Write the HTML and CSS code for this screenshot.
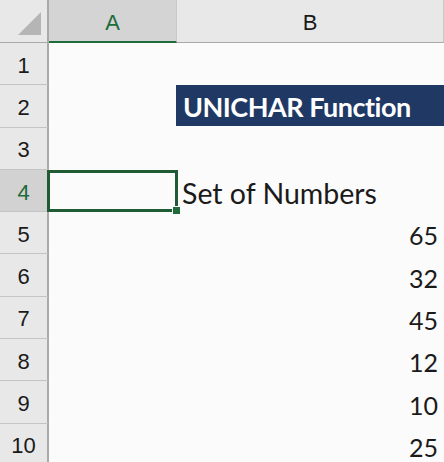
FILE: index.html
```html
<!DOCTYPE html>
<html>
<head>
<meta charset="utf-8">
<link rel="stylesheet" href="styles.css">
</head>
<body>
<div class="sheet">
  <div class="corner"><span class="tri"></span></div>
  <div class="colhead sel">A</div>
  <div class="colhead">B</div>

  <div class="rowhead">1</div><div class="cell"></div><div class="cell"></div>
  <div class="rowhead">2</div><div class="cell"></div><div class="cell"><div class="title">UNICHAR Function</div></div>
  <div class="rowhead">3</div><div class="cell"></div><div class="cell"></div>
  <div class="rowhead sel">4</div><div class="cell active"><span class="handle"></span></div><div class="cell text">Set of Numbers</div>
  <div class="rowhead">5</div><div class="cell"></div><div class="cell num">65</div>
  <div class="rowhead">6</div><div class="cell"></div><div class="cell num">32</div>
  <div class="rowhead">7</div><div class="cell"></div><div class="cell num">45</div>
  <div class="rowhead">8</div><div class="cell"></div><div class="cell num">12</div>
  <div class="rowhead">9</div><div class="cell"></div><div class="cell num">10</div>
  <div class="rowhead">10</div><div class="cell"></div><div class="cell num">25</div>
</div>
</body>
</html>
```
FILE: styles.css
```css
html, body {
  margin: 0;
  padding: 0;
  background: #fbfbfb;
  overflow: hidden;
}
.sheet {
  display: grid;
  grid-template-columns: 49px 128px 267px;
  grid-template-rows: 43px repeat(10, 42.3px);
  font-family: "Lato", "Open Sans", sans-serif;
  color: #1a1a1a;
}
.corner {
  background: #e8e8e8;
  border-right: 2px solid #a9a9a9;
  border-bottom: 1px solid #a9a9a9;
  position: relative;
}
.tri {
  position: absolute;
  right: 6px;
  bottom: 7px;
  width: 0;
  height: 0;
  border-left: 23px solid transparent;
  border-bottom: 23px solid #b5b5b5;
}
.colhead {
  background: #e8e8e8;
  border-bottom: 1px solid #a9a9a9;
  border-right: 1px solid #c8c8c8;
  display: flex;
  align-items: center;
  justify-content: center;
  font-family: "Liberation Sans", sans-serif;
  font-size: 22px;
  padding-top: 4px;
  box-sizing: border-box;
}
.colhead.sel {
  background: #d4d4d4;
  color: #1e6b3c;
  border-bottom: 2px solid #1f6b3a;
}
.rowhead {
  background: #e8e8e8;
  border-right: 2px solid #a9a9a9;
  border-bottom: 1px solid #c4c4c4;
  display: flex;
  align-items: center;
  justify-content: center;
  font-family: "Liberation Sans", sans-serif;
  font-size: 22px;
  padding-top: 4px;
  box-sizing: border-box;
}
.rowhead.sel {
  background: #d2d2d2;
  color: #1e6b3c;
}
.cell {
  position: relative;
  box-sizing: border-box;
  font-size: 25px;
}
.title {
  position: absolute;
  left: -1px;
  top: 0;
  right: 0;
  height: 41px;
  background: #1f3864;
  color: #ffffff;
  font-weight: bold;
  font-size: 27px;
  letter-spacing: -0.5px;
  display: flex;
  align-items: center;
  padding-left: 7px;
  padding-top: 2px;
  box-sizing: border-box;
}
.active {
  border: 3px solid #1f5c34;
  margin-left: -2px;
  margin-right: -1px;
}
.handle {
  position: absolute;
  right: -6px;
  bottom: -6px;
  width: 7px;
  height: 7px;
  background: #1f6b3a;
  border: 1px solid #fbfbfb;
}
.text {
  display: flex;
  align-items: center;
  padding-left: 5px;
  padding-top: 4px;
  font-size: 28.5px;
}
.num {
  display: flex;
  align-items: center;
  justify-content: flex-end;
  padding-right: 6px;
  padding-top: 4px;
}
```
